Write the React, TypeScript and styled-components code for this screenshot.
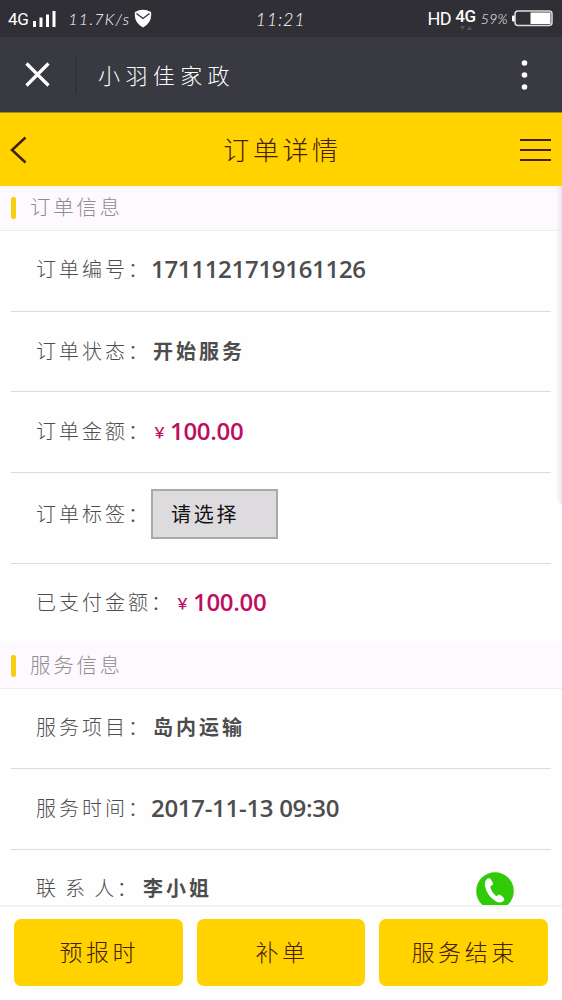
import React from "react";
import styled, { createGlobalStyle } from "styled-components";

const GlobalStyle = createGlobalStyle`
  * { box-sizing: border-box; }
  body { margin: 0; background: #fff; }
`;

const cjk = `"Noto Sans CJK SC", sans-serif`;
const latin = `"Open Sans", "Noto Sans", "Noto Sans CJK SC", sans-serif`;

const Screen = styled.div`
  position: relative;
  display: flex;
  flex-direction: column;
  width: 562px;
  height: 1000px;
  overflow: hidden;
  background: #fefefe;
  font-family: ${cjk};
  white-space: nowrap;
`;

const StatusBar = styled.div`
  display: grid;
  grid-template-columns: 1fr auto 1fr;
  align-items: center;
  height: 37px;
  padding: 0 9px 0 8px;
  background: #302f35;
  color: #fff;
`;

const StatusGroup = styled.div<{ $end?: boolean }>`
  display: flex;
  align-items: center;
  justify-content: ${(p) => (p.$end ? "flex-end" : "flex-start")};
`;

const Network = styled.span<{ $size?: number; $gap?: number; $bold?: boolean }>`
  font: ${(p) => (p.$bold ? 500 : 400)} ${(p) => p.$size ?? 17}px/20px Roboto, sans-serif;
  letter-spacing: -0.4px;
  margin-right: ${(p) => p.$gap ?? 5}px;
`;

const NetworkStack = styled.span`
  display: flex;
  flex-direction: column;
  align-items: center;
  margin-right: 5px;
  height: 26px;
`;

const Script = styled.span<{ $size: number; $spacing: number; $before?: number; $after?: number }>`
  margin-left: ${(p) => p.$before ?? 0}px;
  margin-right: ${(p) => p.$after ?? 0}px;
  font: italic 300 ${(p) => p.$size}px/20px Lato, sans-serif;
  letter-spacing: ${(p) => p.$spacing}px;
`;

const TitleBar = styled.div`
  display: flex;
  align-items: center;
  height: 75px;
  padding: 0 34px 0 25px;
  background: #393941;
  color: #fff;
`;

const Divider = styled.div`
  width: 2px;
  height: 39px;
  margin: 0 21px 0 25px;
  background: #323239;
`;

const AppTitle = styled.div`
  flex: 1;
  padding-bottom: 2px;
  font-size: 22px;
  font-weight: 300;
  letter-spacing: 5.4px;
`;

const NavBar = styled.div`
  display: grid;
  grid-template-columns: 40px 1fr 40px;
  align-items: center;
  height: 74px;
  padding: 0 10px;
  border-top: 1px solid #a18a18;
  background: #ffd200;
  color: #42210b;
`;

const NavTitle = styled.h1`
  margin: 0;
  padding: 0 0 3px 3px;
  text-align: center;
  font-size: 26px;
  font-weight: 300;
  letter-spacing: 3.6px;
`;

const MenuIcon = styled.svg`
  justify-self: end;
`;

const Content = styled.main`
  flex: 1;
  min-height: 0;
  overflow: hidden;
`;

const SectionHeader = styled.div<{ $height: number }>`
  display: flex;
  align-items: center;
  height: ${(p) => p.$height}px;
  padding-left: 11px;
  border-bottom: 1px solid #ededed;
  background: #fdf9fe;
`;

const SectionTitle = styled.h2`
  margin: 0;
  padding-bottom: 4px;
  color: #8f8c90;
  font-size: 20.5px;
  font-weight: 300;
  letter-spacing: 2.7px;
`;

const Marker = styled.span`
  width: 5px;
  height: 22px;
  margin-right: 14px;
  border-radius: 2px;
  background: #f8cf10;
`;

const Row = styled.div<{ $height: number; $lift?: number; $last?: boolean }>`
  display: flex;
  align-items: center;
  height: ${(p) => p.$height}px;
  margin: 0 11px;
  padding: 0 37px ${(p) => p.$lift ?? 3}px 25px;
  border-bottom: ${(p) => (p.$last ? "0" : "1px")} solid #dcdcdc;
  color: #4d4d4d;
`;

const Label = styled.span<{ $width: number; $tight?: boolean }>`
  flex: none;
  width: ${(p) => p.$width}px;
  font-size: 20px;
  font-weight: 300;
  letter-spacing: ${(p) => (p.$tight ? 2.6 : 3)}px;
  word-spacing: ${(p) => (p.$tight ? -0.5 : 0)}px;
`;

const Value = styled.span`
  font-size: 20px;
  font-weight: 700;
  letter-spacing: 3px;
  padding-left: 1px;
`;

const NumberValue = styled.span`
  font-family: ${latin};
  font-size: 24px;
  font-weight: 600;
  letter-spacing: -0.3px;
`;

const Money = styled(NumberValue)`
  display: flex;
  align-items: center;
  color: #bd0f62;
`;

const Yen = styled.span`
  width: 18px;
  padding-top: 2px;
  font-size: 15px;
  font-weight: 500;
`;

const Select = styled.button`
  width: 127px;
  height: 50px;
  padding: 0 0 0 18px;
  border: 2px solid #aaa8aa;
  border-radius: 0;
  background: #dedbdf;
  color: #111;
  text-align: left;
  font: 400 20px/44px ${cjk};
  letter-spacing: 2.8px;
`;

const CallIcon = styled.svg`
  flex: none;
  margin-left: auto;
  margin-top: 7px;
`;

const Footer = styled.footer`
  display: grid;
  grid-template-columns: repeat(3, 1fr);
  gap: 14px;
  height: 95px;
  padding: 12px 14px 14px;
  border-top: 2px solid #f3f3f3;
  background: #fefefe;
`;

const ActionButton = styled.button`
  padding: 0 0 2px 2px;
  border: 0;
  border-radius: 7px;
  background: #ffd200;
  color: #42210b;
  font: 300 23px/1 ${cjk};
  letter-spacing: 3.6px;
`;

const EdgeShade = styled.div`
  position: absolute;
  top: 186px;
  right: 0;
  width: 6px;
  height: 318px;
  background: linear-gradient(to right, rgba(235, 229, 238, 0), #eae6ed);
  border-bottom-left-radius: 6px;
`;

function SignalIcon() {
  return (
    <svg width="23" height="17" viewBox="0 0 23 17" fill="#fff">
      <path d="M0 11h3v6H0zM6.500 7.500h3V17h-3zM13 4.500h3V17h-3zM19.500 1h3v16h-3z" />
    </svg>
  );
}

function ShieldIcon() {
  return (
    <svg width="18" height="19" viewBox="0 0 18 19">
      <path d="M1 3Q9-1.500 17 3Q18.500 13 9 18.500Q-0.500 13 1 3Z" fill="#fff" />
      <path d="M2.500 4.500L9 9.500L15.500 4.500" fill="none" stroke="#302f35" strokeWidth="1.300" />
    </svg>
  );
}

function BatteryIcon() {
  return (
    <svg width="41" height="17" viewBox="0 0 41 17">
      <rect x="0" y="5.500" width="3" height="6" rx="1" fill="#fff" />
      <rect x="3" y="1" width="37" height="14.500" rx="3" fill="none" stroke="#ddd" strokeWidth="1.500" />
      <rect x="18.500" y="2.500" width="20" height="11.500" fill="#fff" />
    </svg>
  );
}

export default function App() {
  return (
    <Screen>
      <GlobalStyle />
      <StatusBar>
        <StatusGroup>
          <Network>4G</Network>
          <SignalIcon />
          <Script $size={16} $spacing={1.25} $before={12} $after={4}>11.7K/s</Script>
          <ShieldIcon />
        </StatusGroup>
        <Script $size={18} $spacing={0.8}>11:21</Script>
        <StatusGroup $end>
          <Network $size={18} $gap={4}>HD</Network>
          <NetworkStack>
            <Network $gap={0} $bold>4G</Network>
            <svg width="12" height="5" viewBox="0 0 12 5" fill="#55545a">
              <path d="M0 0h5L2.500 4zM7 4h5L9.500 0z" />
            </svg>
          </NetworkStack>
          <Script $size={14} $spacing={0.3} $after={4}>59%</Script>
          <BatteryIcon />
        </StatusGroup>
      </StatusBar>

      <TitleBar>
        <svg width="25" height="25" viewBox="0 0 25 25" fill="none" stroke="#fff" strokeWidth="3.200">
          <path d="M1.500 1.500L23.500 23.500M23.500 1.500L1.500 23.500" />
        </svg>
        <Divider />
        <AppTitle>小羽佳家政</AppTitle>
        <svg width="8" height="32" viewBox="0 0 8 32" fill="#fff">
          <circle cx="4.500" cy="4" r="2.800" />
          <circle cx="4.500" cy="16" r="2.800" />
          <circle cx="4.500" cy="28" r="2.800" />
        </svg>
      </TitleBar>

      <NavBar>
        <svg width="18" height="28" viewBox="0 0 18 28" fill="none" stroke="#42210b" strokeWidth="2.500">
          <path d="M15.500 1.500L2 14L15.500 26.500" />
        </svg>
        <NavTitle>订单详情</NavTitle>
        <MenuIcon width="32" height="24" viewBox="0 0 32 24" stroke="#42210b" strokeWidth="2.200">
          <path d="M0 2H31M0 12H31M0 22H31" />
        </MenuIcon>
      </NavBar>

      <Content>
        <SectionHeader $height={45}>
          <Marker />
          <SectionTitle>订单信息</SectionTitle>
        </SectionHeader>
        <Row $height={81} $lift={5}>
          <Label $width={115}>订单编号：</Label>
          <NumberValue>1711121719161126</NumberValue>
        </Row>
        <Row $height={80}>
          <Label $width={116}>订单状态：</Label>
          <Value>开始服务</Value>
        </Row>
        <Row $height={81}>
          <Label $width={116}>订单金额：</Label>
          <Money><Yen>￥</Yen>100.00</Money>
        </Row>
        <Row $height={91} $lift={9}>
          <Label $width={115}>订单标签：</Label>
          <Select>请选择</Select>
        </Row>
        <Row $height={79} $lift={4} $last>
          <Label $width={139}>已支付金额：</Label>
          <Money><Yen>￥</Yen>100.00</Money>
        </Row>
        <SectionHeader $height={46}>
          <Marker />
          <SectionTitle>服务信息</SectionTitle>
        </SectionHeader>
        <Row $height={80} $lift={5}>
          <Label $width={116}>服务项目：</Label>
          <Value>岛内运输</Value>
        </Row>
        <Row $height={81}>
          <Label $width={115}>服务时间：</Label>
          <NumberValue>2017-11-13 09:30</NumberValue>
        </Row>
        <Row $height={81} $lift={6} $last>
          <Label $width={106} $tight>联 系 人：</Label>
          <Value>李小姐</Value>
          <CallIcon width="38" height="38" viewBox="0 0 38 38">
            <circle cx="19" cy="19" r="18.800" fill="#30ca08" />
            <path
              d="M11.500 6.500Q8 9 9 14Q11 24 20 29.500Q25 32 28 28.500Q29 27 27.500 25.500L24.500 23Q23 22 21.500 23.500Q20.500 24.500 19 23Q15.500 19.500 14.500 16Q14 14 15.500 13.500Q17.500 12.500 17 11L15 7.500Q13.500 5.500 11.500 6.500Z"
              fill="#fff"
            />
          </CallIcon>
        </Row>
      </Content>

      <Footer>
        <ActionButton>预报时</ActionButton>
        <ActionButton>补单</ActionButton>
        <ActionButton>服务结束</ActionButton>
      </Footer>
      <EdgeShade />
    </Screen>
  );
}
